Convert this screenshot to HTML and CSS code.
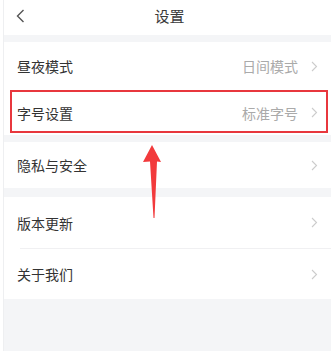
FILE: index.html
```html
<!DOCTYPE html>
<html lang="zh">
<head>
<meta charset="utf-8">
<link rel="stylesheet" href="styles.css">
</head>
<body>
<div class="page">
  <header class="nav">
    <svg class="back" width="9" height="14" viewBox="0 0 9 14"><polyline points="7.5,1 1.5,7 7.5,13" fill="none" stroke="#555" stroke-width="1.4"/></svg>
    <h1 class="title">设置</h1>
    <span class="spacer"></span>
  </header>
  <div class="band"></div>
  <section class="group">
    <div class="row row-a">
      <span class="label">昼夜模式</span>
      <span class="value">日间模式</span>
      <svg class="chev" width="7" height="11" viewBox="0 0 7 11"><polyline points="1,1 5.5,5.5 1,10" fill="none" stroke="#ccc" stroke-width="1.1"/></svg>
    </div>
    <div class="row row-b highlight">
      <span class="label">字号设置</span>
      <span class="value">标准字号</span>
      <svg class="chev" width="7" height="11" viewBox="0 0 7 11"><polyline points="1,1 5.5,5.5 1,10" fill="none" stroke="#ccc" stroke-width="1.1"/></svg>
    </div>
  </section>
  <div class="band"></div>
  <section class="group">
    <div class="row row-c">
      <span class="label">隐私与安全</span>
      <span class="value"></span>
      <svg class="chev" width="7" height="11" viewBox="0 0 7 11"><polyline points="1,1 5.5,5.5 1,10" fill="none" stroke="#ccc" stroke-width="1.1"/></svg>
    </div>
  </section>
  <div class="band band-wide"></div>
  <section class="group">
    <div class="row row-d">
      <span class="label">版本更新</span>
      <span class="value"></span>
      <svg class="chev" width="7" height="11" viewBox="0 0 7 11"><polyline points="1,1 5.5,5.5 1,10" fill="none" stroke="#ccc" stroke-width="1.1"/></svg>
    </div>
    <div class="divider"></div>
    <div class="row row-e">
      <span class="label">关于我们</span>
      <span class="value"></span>
      <svg class="chev" width="7" height="11" viewBox="0 0 7 11"><polyline points="1,1 5.5,5.5 1,10" fill="none" stroke="#ccc" stroke-width="1.1"/></svg>
    </div>
  </section>
  <div class="rest"></div>
  <svg class="arrow" width="24" height="80" viewBox="0 0 24 80">
    <polygon points="9,0 18,17 14,16.5 11.5,73 10.5,73 7,16.5 0,17" fill="#f23a3c"/>
  </svg>
</div>
</body>
</html>
```

FILE: styles.css
```css
* { box-sizing: border-box; }
html, body {
  margin: 0;
  padding: 0;
  background: #ffffff;
}
body {
  font-family: "Noto Sans CJK SC", "Noto Sans", sans-serif;
  color: #333;
}
.page {
  position: relative;
  margin-left: 3px;
  border-left: 1px solid #eeeff1;
  width: 328px;
  height: 351px;
  display: flex;
  flex-direction: column;
  background: #f4f5f7;
}
.nav {
  height: 35px;
  padding-bottom: 5px;
  background: #fff;
  display: grid;
  grid-template-columns: 40px 1fr 40px;
  align-items: center;
}
.back {
  margin-left: 12px;
  margin-top: 1px;
}
.title {
  margin: 0;
  font-size: 15px;
  font-weight: 400;
  text-align: center;
  color: #3a3a3a;
  line-height: 1;
  padding-left: 4px;
}
.band { height: 7px; background: #f4f5f7; }
.band-wide { height: 9px; }
.group { background: #fff; }
.row {
  display: flex;
  align-items: center;
  padding: 0 13px 0 13px;
  font-size: 14px;
  line-height: 1;
}
.row-a { height: 48px; }
.row-b { height: 45px; }
.row-c { height: 46px; }
.row-d { height: 51px; }
.row-e { height: 50px; }
.label { color: #333; flex: 1; }
.value { color: #aaa; margin-right: 13px; }
.chev { display: block; }
.divider {
  height: 1px;
  margin-left: 16px;
  background: #f0f0f2;
}
.highlight { position: relative; }
.highlight::after {
  content: "";
  position: absolute;
  left: 6px;
  right: 3px;
  top: 0;
  bottom: 2px;
  border: 2px solid #e8373d;
}
.rest { flex: 1; background: #f4f5f7; }
.arrow {
  position: absolute;
  left: 139px;
  top: 145px;
}
```
